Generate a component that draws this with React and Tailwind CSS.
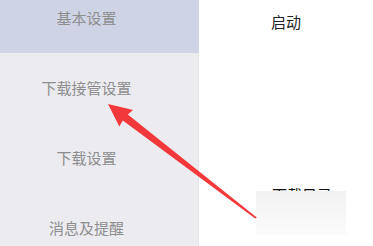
const menu = ["基本设置", "下载接管设置", "下载设置", "消息及提醒"];

const font = { fontFamily: '"Noto Sans CJK SC", "Noto Sans", sans-serif' };

export default function App() {
  return (
    <div
      className="relative flex w-[373px] h-[246px] overflow-hidden bg-white"
      style={font}
    >
      <div className="w-[199px] h-full bg-[#ebebf0] border-r border-[#e4e4ea]">
        <div className="w-[173px] mt-[-17px]">
          {menu.map((m, i) => (
            <div
              key={m}
              className={`h-[70px] flex items-center justify-center text-[15px] text-[#8e8e8e] ${
                i === 0 ? "bg-[#cfd3e6] w-[199px] pr-[26px]" : ""
              }`}
            >
              {m}
            </div>
          ))}
        </div>
      </div>

      <div className="flex-1 flex flex-col">
        <div className="h-[20px] mt-[12px] flex justify-center text-[15px] leading-[20px] text-[#222]">
          启动
        </div>
        <div className="mt-[153px] ml-[73px] text-[15px] leading-[20px] text-[#111]">
          下载目录
        </div>
      </div>

      <div className="absolute left-[256px] top-[191px] w-[90px] h-[44px] bg-gradient-to-b from-[#f2f2f2] to-[#fbfbfb]" />

      <svg
        className="absolute left-0 top-0"
        width="373"
        height="246"
        viewBox="0 0 373 246"
      >
        <polygon
          points="108,104 133,110 127.8,114.6 256.8,217.4 255.2,218.6 122.8,120.6 119.3,126.5"
          fill="#f2383a"
        />
      </svg>
    </div>
  );
}
